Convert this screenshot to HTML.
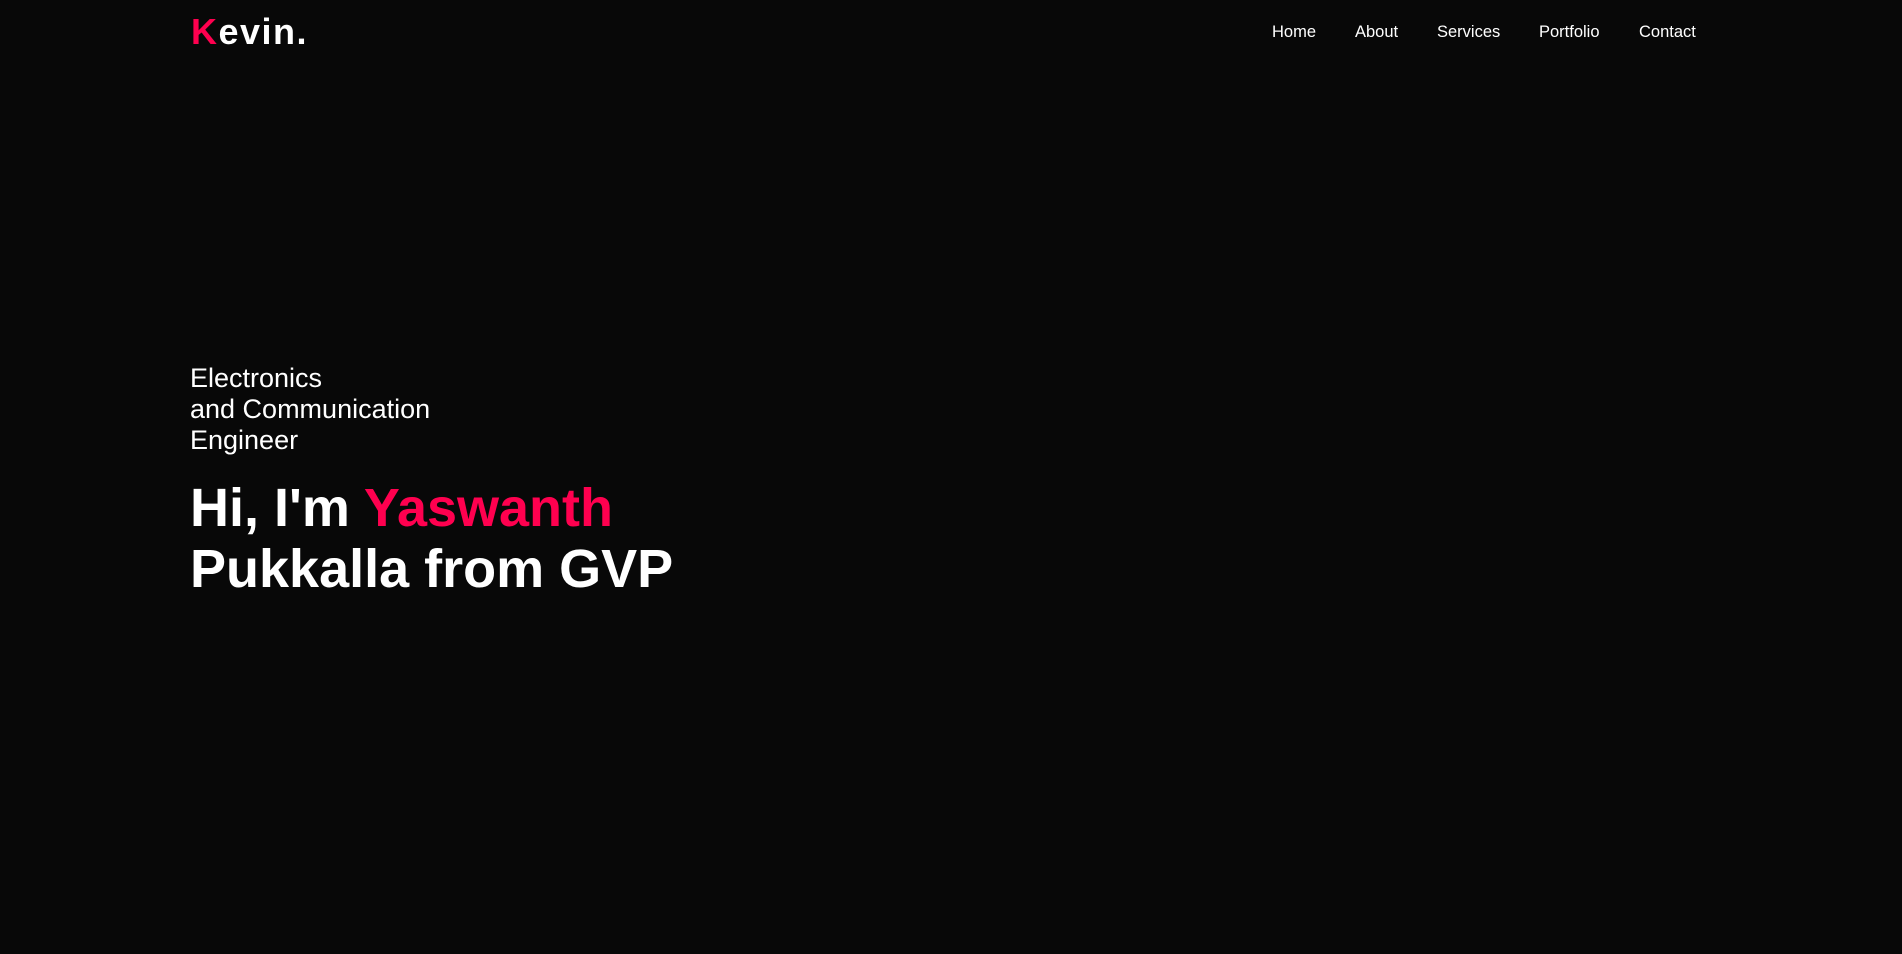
<!DOCTYPE html>
<html><head><meta charset="utf-8"><style>
html,body{margin:0;padding:0;background:#080808;width:1902px;height:954px;overflow:hidden;font-family:"Liberation Sans",Arial,sans-serif;color:#fff}
.logo{position:absolute;left:191px;top:14px;font-size:36px;font-weight:bold;letter-spacing:1.5px;line-height:36px}
.logo span{color:#ff004f}
.nav a{position:absolute;top:24px;font-size:16.5px;color:#fff;text-decoration:none;line-height:16.5px}
.sub{position:absolute;left:190px;top:363px;font-size:27px;line-height:31px}
.h{position:absolute;left:190px;top:478px;font-size:54px;font-weight:bold;line-height:61px}
.h span{color:#ff004f}
</style></head><body>
<div class="logo"><span>K</span>evin.</div>
<div class="nav">
<a style="left:1272px">Home</a>
<a style="left:1355px">About</a>
<a style="left:1437px">Services</a>
<a style="left:1539px">Portfolio</a>
<a style="left:1639px">Contact</a>
</div>
<div class="sub">Electronics<br>and Communication<br>Engineer</div>
<div class="h">Hi, I'm <span>Yaswanth</span><br>Pukkalla from GVP</div>
</body></html>
